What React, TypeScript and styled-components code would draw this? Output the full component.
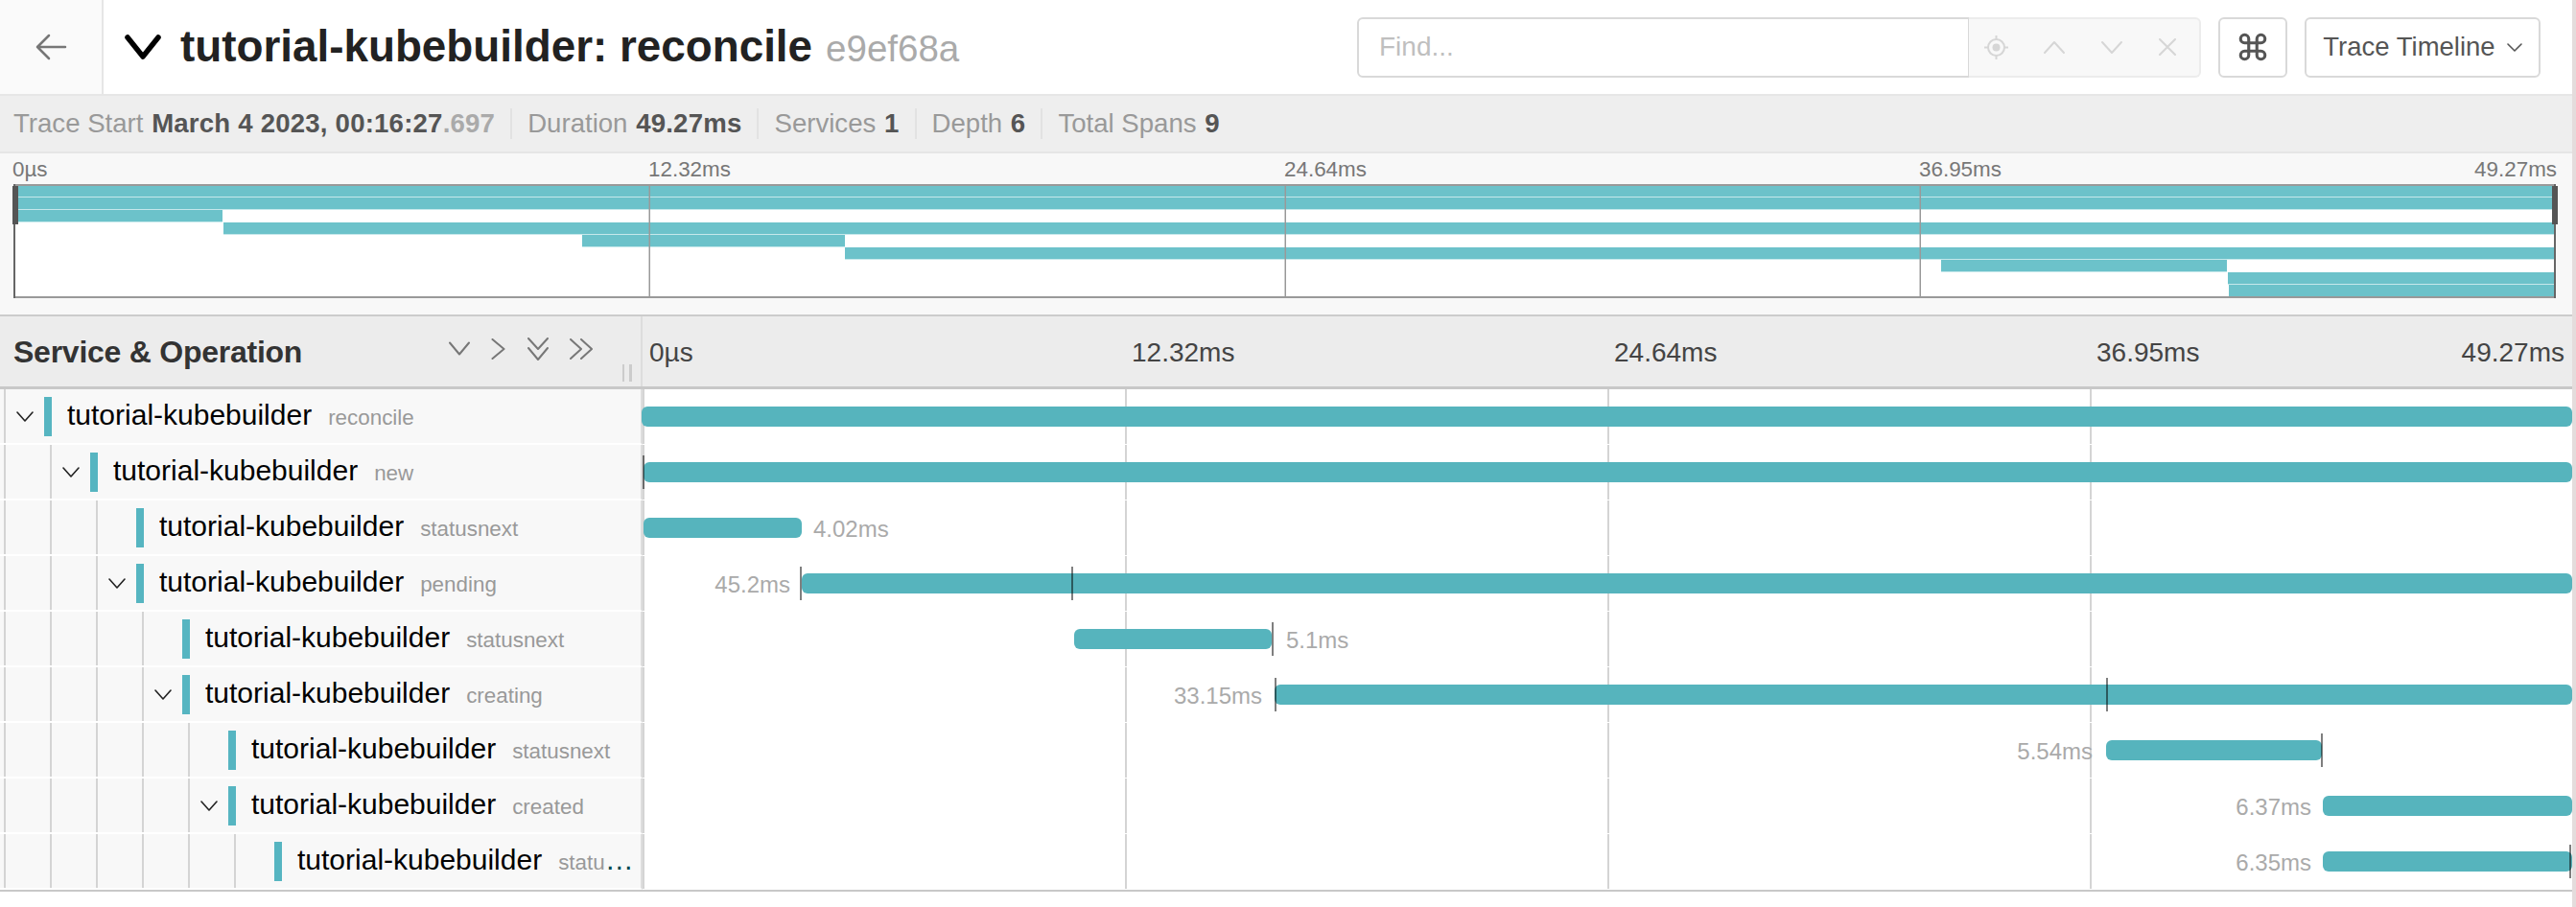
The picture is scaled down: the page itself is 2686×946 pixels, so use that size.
import React from 'react';
import styled, { createGlobalStyle } from 'styled-components';

const TL = 670;

const Global = createGlobalStyle`
  html, body { margin: 0; padding: 0; background: #fff; }
  body { font-family: "Liberation Sans", Arial, sans-serif; }
  * { box-sizing: border-box; }
`;

const Page = styled.div`
  width: 2686px;
  height: 946px;
  border-right: 4px solid #e4dcdc;
  overflow: hidden;
  background: #fff;
`;

const TopBar = styled.header`
  display: flex;
  align-items: stretch;
  height: 98px;
  background: #fff;
`;
const BackLink = styled.a`
  flex: 0 0 108px;
  display: flex;
  align-items: center;
  justify-content: center;
  background: #fafafa;
  border-right: 2px solid #e6e6e6;
  color: #777;
`;
const TitleBlock = styled.div`
  flex: 1;
  display: flex;
  align-items: center;
  padding-left: 22px;
  min-width: 0;
`;
const TitleText = styled.h1`
  margin: 0 0 0 20px;
  font-size: 45.8px;
  font-weight: 700;
  color: #222;
  white-space: nowrap;
`;
const TraceId = styled.small`
  margin-left: 14px;
  font-size: 38.5px;
  font-weight: 400;
  color: #aaa;
`;
const Tools = styled.div`
  display: flex;
  align-items: center;
  gap: 18px;
  padding-right: 33px;
`;
const FindGroup = styled.div`
  display: flex;
  height: 63px;
`;
const FindInput = styled.div`
  width: 638px;
  border: 2px solid #d9d9d9;
  border-right-width: 1px;
  border-radius: 6px 0 0 6px;
  padding-left: 21px;
  display: flex;
  align-items: center;
  font-size: 28px;
  color: #bfbfbf;
`;
const FindActions = styled.div`
  width: 242px;
  border: 2px solid #ececec;
  border-left: 0;
  border-radius: 0 6px 6px 0;
  background: #f8f8f8;
  color: #d6d6d6;
  display: flex;
  align-items: center;
  padding-left: 16px;
  gap: 36px;
`;
const ToolButton = styled.button<{ $w: number }>`
  width: ${p => p.$w}px;
  height: 63px;
  padding: 0;
  background: #fff;
  border: 2px solid #d9d9d9;
  border-radius: 6px;
  display: flex;
  align-items: center;
  justify-content: center;
  gap: 12px;
  font: 400 27.5px "Liberation Sans", Arial, sans-serif;
  color: #555;
`;

const InfoBar = styled.div`
  display: flex;
  align-items: center;
  height: 62px;
  padding-left: 14px;
  background: #eee;
  border-top: 2px solid #e6e6e6;
  border-bottom: 2px solid #e6e6e6;
  font-size: 27.6px;
  color: #999;
`;
const InfoItem = styled.span`
  padding: 0 16px;
  border-left: 2px solid #e2e2e2;
  line-height: 32px;
  &:first-child { padding-left: 0; border-left: 0; }
`;
const InfoValue = styled.b`
  margin-left: 1px;
  color: #555;
  font-weight: 700;
  letter-spacing: 0.2px;
`;
const InfoFaint = styled.span`
  color: #aaa;
`;

const Minimap = styled.section`
  height: 170px;
  background: #f8f8f8;
  border-bottom: 2px solid #ccc;
  padding: 0 16px 0 13px;
`;
const MiniAxis = styled.div`
  display: grid;
  grid-template-columns: 663px 663px 662px 1fr;
  height: 31px;
  margin-bottom: 1px;
  align-items: end;
  font-size: 22.4px;
  line-height: 28px;
  color: #777;
`;
const MiniSpread = styled.div`
  display: flex;
  justify-content: space-between;
`;
const MiniChart = styled.svg`
  display: block;
  width: 2657px;
  height: 119px;
`;

const TableHead = styled.div`
  display: flex;
  height: 76px;
  background: #ececec;
  border-bottom: 3px solid #c8c8c8;
`;
const HeadName = styled.div`
  position: relative;
  flex: 0 0 ${TL}px;
  display: flex;
  align-items: center;
  padding: 2px 0 0 14px;
  border-right: 2px solid #ddd;
`;
const HeadTitle = styled.h3`
  margin: 0;
  flex: 1;
  font-size: 32px;
  font-weight: 700;
  letter-spacing: -0.25px;
  color: #333;
`;
const HeadActions = styled.div`
  display: flex;
  align-items: center;
  gap: 22px;
  margin-right: 50px;
  margin-top: -8px;
  color: #777;
`;
const ResizeGrip = styled.span`
  position: absolute;
  left: 649px;
  top: 50px;
  width: 10px;
  height: 18px;
  border-left: 2px solid #ccc;
  border-right: 3px solid #ccc;
`;
const HeadAxis = styled.div`
  flex: 1;
  display: grid;
  grid-template-columns: 503px 503px 503px 1fr;
  align-items: center;
  padding-top: 2px;
  font-size: 28px;
  color: #444;
`;
const AxisCell = styled.span`
  padding-left: 7px;
`;
const AxisEnd = styled.div`
  display: flex;
  justify-content: space-between;
  padding: 0 8px 0 7px;
`;

const Rows = styled.div`
  border-bottom: 2px solid #c8c8c8;
`;
const Row = styled.div`
  display: flex;
  height: 58px;
`;
const NameCell = styled.div`
  flex: 0 0 ${TL}px;
  min-width: 0;
  display: flex;
  height: 58px;
  padding: 0 0 0 4px;
  background: #f8f8f8;
  border-right: 2px solid #ddd;
  border-bottom: 2px solid #fff;
`;
const Guide = styled.div<{ $last?: boolean }>`
  flex: 0 0 ${p => (p.$last ? 42 : 48)}px;
  display: flex;
  align-items: center;
  justify-content: center;
  border-left: 2px solid #d4d4d4;
  color: #222;
`;
const ServiceBar = styled.span`
  flex: 0 0 8px;
  height: 41px;
  margin-top: 8px;
  background: #56b5c1;
`;
const NameText = styled.div`
  flex: 1;
  min-width: 0;
  margin-left: 16px;
  padding-right: 7px;
  font-size: 30px;
  line-height: 54px;
  white-space: nowrap;
  overflow: hidden;
  text-overflow: ellipsis;
  color: #00474e;
`;
const Service = styled.span`
  color: #000;
`;
const Operation = styled.span`
  margin-left: 17px;
  font-size: 22.4px;
  color: #999;
`;
const TimeCell = styled.div`
  position: relative;
  flex: 1;
  min-width: 0;
  border-bottom: 1px solid #fff;
  background-image: linear-gradient(to right, #d4d4d4 2px, transparent 2px);
  background-size: 503px 100%;
  background-position: 0 0;
`;
const SpanBar = styled.div`
  position: absolute;
  top: 18px;
  height: 21px;
  background: #56b4bd;
  border-radius: 6px;
`;
const SpanTick = styled.span`
  position: absolute;
  top: 11px;
  height: 35px;
  width: 2px;
  background: rgba(0, 0, 0, 0.5);
`;
const SpanLabel = styled.span`
  position: absolute;
  top: 14px;
  font-size: 24px;
  line-height: 32px;
  white-space: nowrap;
  color: #aaa;
`;

const Chev = ({ d, w, h, sw = 2 }: { d: string; w: number; h: number; sw?: number }) => (
  <svg width={w} height={h} viewBox={`0 0 ${w} ${h}`} fill="none" stroke="currentColor" strokeWidth={sw} strokeLinecap="round" strokeLinejoin="round">
    <path d={d} />
  </svg>
);

const mini: [number, number][] = [
  [14, 2663], [14, 2663], [14, 232], [233, 2663], [607, 881], [881, 2663], [2024, 2322], [2323, 2663], [2324, 2663],
];

type S = { op: string; depth: number; open?: boolean; bar: [number, number]; ticks: number[]; label?: string; labelAt?: number; labelEnd?: number };
const spans: S[] = [
  { op: 'reconcile', depth: 0, open: true, bar: [669, 2682], ticks: [] },
  { op: 'new', depth: 1, open: true, bar: [671, 2682], ticks: [670] },
  { op: 'statusnext', depth: 2, bar: [671, 836], ticks: [], label: '4.02ms', labelAt: 848 },
  { op: 'pending', depth: 2, open: true, bar: [836, 2682], ticks: [834, 1117], label: '45.2ms', labelEnd: 824 },
  { op: 'statusnext', depth: 3, bar: [1120, 1326], ticks: [1326], label: '5.1ms', labelAt: 1341 },
  { op: 'creating', depth: 3, open: true, bar: [1329, 2682], ticks: [1329, 2196], label: '33.15ms', labelEnd: 1316 },
  { op: 'statusnext', depth: 4, bar: [2196, 2421], ticks: [2420], label: '5.54ms', labelEnd: 2182 },
  { op: 'created', depth: 4, open: true, bar: [2422, 2682], ticks: [], label: '6.37ms', labelEnd: 2410 },
  { op: 'statusnext', depth: 5, bar: [2422, 2682], ticks: [2679], label: '6.35ms', labelEnd: 2410 },
];

export default function App() {
  return (
    <Page>
      <Global />
      <TopBar>
        <BackLink>
          <Chev w={34} h={30} d="M32 15H3M15 3 3 15l12 12" sw={2.5} />
        </BackLink>
        <TitleBlock>
          <Chev w={38} h={26} d="M3 3l16 20L35 3" sw={5.5} />
          <TitleText>
            tutorial-kubebuilder: reconcile
            <TraceId>e9ef68a</TraceId>
          </TitleText>
        </TitleBlock>
        <Tools>
          <FindGroup>
            <FindInput>Find...</FindInput>
            <FindActions>
              <svg width="25" height="25" viewBox="0 0 25 25" fill="none" stroke="currentColor" strokeWidth="2">
                <circle cx="12.5" cy="12.5" r="8.5" />
                <circle cx="12.5" cy="12.5" r="4" fill="currentColor" stroke="none" />
                <path d="M12.5 0v4M12.5 21v4M0 12.5h4M21 12.5h4" />
              </svg>
              <Chev w={24} h={15} d="M2 13 12 2l10 11" />
              <Chev w={24} h={15} d="M2 2l10 11L22 2" />
              <Chev w={20} h={18} d="M2 1l16 16M18 1 2 17" />
            </FindActions>
          </FindGroup>
          <ToolButton $w={72}>
            <svg width="34" height="34" viewBox="0 0 24 24" fill="none" stroke="currentColor" strokeWidth="2.2">
              <path d="M15 6v12a3 3 0 1 0 3-3H6a3 3 0 1 0 3 3V6a3 3 0 1 0-3 3h12a3 3 0 1 0-3-3" />
            </svg>
          </ToolButton>
          <ToolButton $w={246}>
            Trace Timeline
            <Chev w={16} h={9} d="M1 1l7 7 7-7" sw={1.6} />
          </ToolButton>
        </Tools>
      </TopBar>

      <InfoBar>
        <InfoItem>
          Trace Start <InfoValue>March 4 2023, 00:16:27<InfoFaint>.697</InfoFaint></InfoValue>
        </InfoItem>
        <InfoItem>Duration <InfoValue>49.27ms</InfoValue></InfoItem>
        <InfoItem>Services <InfoValue>1</InfoValue></InfoItem>
        <InfoItem>Depth <InfoValue>6</InfoValue></InfoItem>
        <InfoItem>Total Spans <InfoValue>9</InfoValue></InfoItem>
      </InfoBar>

      <Minimap>
        <MiniAxis>
          <span>0µs</span>
          <span>12.32ms</span>
          <span>24.64ms</span>
          <MiniSpread>
            <span>36.95ms</span>
            <span>49.27ms</span>
          </MiniSpread>
        </MiniAxis>
        <MiniChart viewBox="13 192 2657 119">
          <rect x="14" y="192" width="2651" height="119" fill="#fff" />
          {mini.map(([a, b], i) => (
            <g key={i}>
              <rect x={a} y={193 + i * 13} width={b - a} height={13} fill="#c6e8eb" />
              <rect x={a} y={193 + i * 13} width={b - a} height={12} fill="#6cc2ca" />
            </g>
          ))}
          {[677, 1340, 2002].map(x => (
            <rect key={x} x={x - 0.5} y={192} width={1.5} height={119} fill="#999" />
          ))}
          <rect x="14" y="192" width="2651" height="2" fill="#999" />
          <rect x="14" y="309" width="2651" height="2" fill="#999" />
          <rect x="14" y="192" width="2" height="119" fill="#666" />
          <rect x="2663" y="192" width="2" height="119" fill="#666" />
          <rect x="13" y="194" width="6" height="40" fill="#555" />
          <rect x="2661" y="194" width="6" height="40" fill="#555" />
        </MiniChart>
      </Minimap>

      <TableHead>
        <HeadName>
          <HeadTitle>Service &amp; Operation</HeadTitle>
          <HeadActions>
            <Chev w={22} h={16} d="M1 1.5l10 12 10-12" />
            <Chev w={16} h={22} d="M1.5 1l12 10-12 10" />
            <Chev w={22} h={24} d="M1 1l10 11L21 1M1 11l10 12 10-12" />
            <Chev w={24} h={22} d="M1 1l11 10L1 21M12 1l11 10-11 10" />
          </HeadActions>
          <ResizeGrip />
        </HeadName>
        <HeadAxis>
          <AxisCell>0µs</AxisCell>
          <AxisCell>12.32ms</AxisCell>
          <AxisCell>24.64ms</AxisCell>
          <AxisEnd>
            <span>36.95ms</span>
            <span>49.27ms</span>
          </AxisEnd>
        </HeadAxis>
      </TableHead>

      <Rows>
        {spans.map((s, i) => (
          <Row key={i}>
            <NameCell>
              {Array.from({ length: s.depth }).map((_, g) => (
                <Guide key={g} />
              ))}
              <Guide $last>
                {s.open && <Chev w={18} h={11} d="M1 1l8 9 8-9" sw={1.6} />}
              </Guide>
              <ServiceBar />
              <NameText>
                <Service>tutorial-kubebuilder</Service>
                <Operation>{s.op}</Operation>
              </NameText>
            </NameCell>
            <TimeCell>
              <SpanBar style={{ left: s.bar[0] - TL, width: s.bar[1] - s.bar[0] }} />
              {s.ticks.map(t => (
                <SpanTick key={t} style={{ left: t - TL }} />
              ))}
              {s.label && (
                <SpanLabel
                  style={
                    s.labelEnd !== undefined
                      ? { right: 2682 - s.labelEnd }
                      : { left: (s.labelAt as number) - TL }
                  }
                >
                  {s.label}
                </SpanLabel>
              )}
            </TimeCell>
          </Row>
        ))}
      </Rows>
    </Page>
  );
}
